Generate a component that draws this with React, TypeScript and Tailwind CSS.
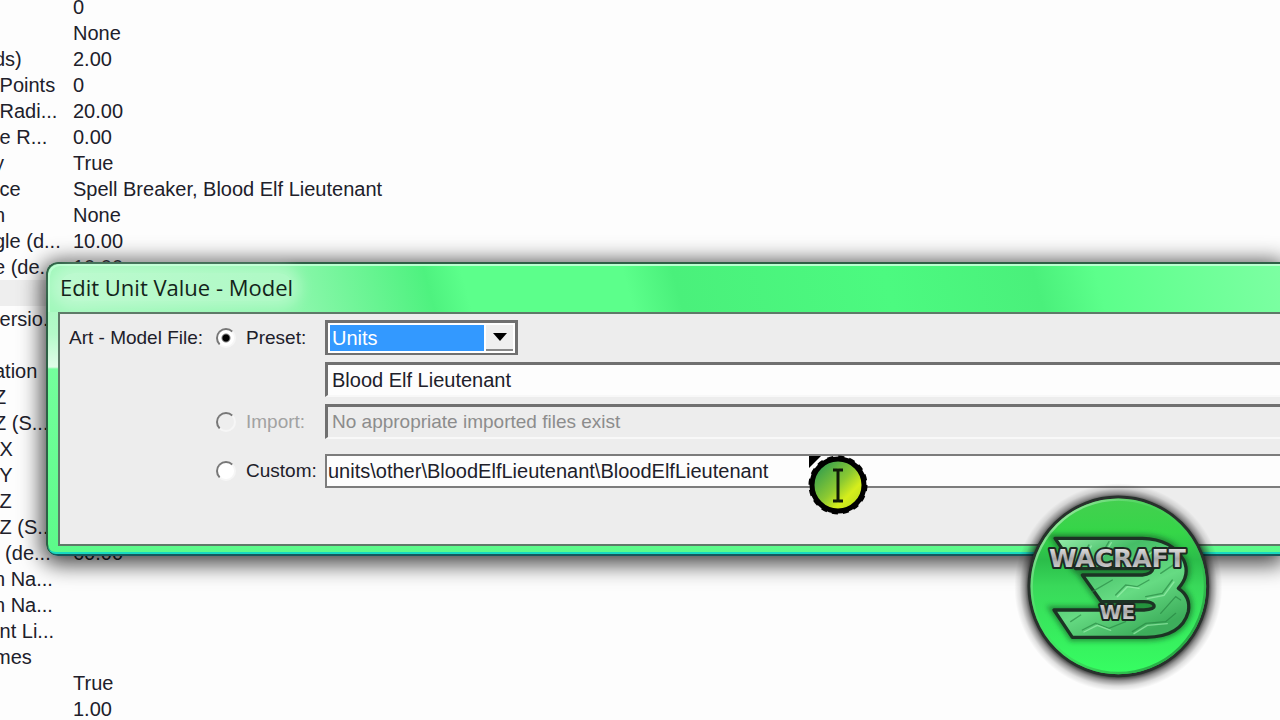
import { useState } from "react";

const ROWS: { label: string; value: string; selected?: boolean }[] = [
  { label: "", value: "0" },
  { label: "", value: "None" },
  { label: "ds)", value: "2.00" },
  { label: " Points", value: "0" },
  { label: " Radi...", value: "20.00" },
  { label: " e R...", value: "0.00" },
  { label: "y", value: "True" },
  { label: " ce", value: "Spell Breaker, Blood Elf Lieutenant" },
  { label: "n", value: "None" },
  { label: "gle (d...", value: "10.00" },
  { label: "e (de...", value: "10.00" },
  { label: "", value: "", selected: true },
  { label: " ersio...", value: "" },
  { label: "", value: "" },
  { label: "ation", value: "" },
  { label: "Z", value: "" },
  { label: "Z (S...", value: "" },
  { label: " X", value: "" },
  { label: " Y", value: "" },
  { label: " Z", value: "" },
  { label: " Z (S...", value: "" },
  { label: "  (de...", value: "60.00" },
  { label: "n Na...", value: "" },
  { label: "n Na...", value: "" },
  { label: " nt Li...", value: "" },
  { label: "mes", value: "" },
  { label: "", value: "True" },
  { label: "", value: "1.00" },
];

const RADIO =
  "appearance-none shrink-0 w-5 h-5 rounded-full border-2 border-t-[#777] border-l-[#777] border-b-[#f6f6f6] border-r-[#f6f6f6] bg-white disabled:bg-[#eee] checked:bg-[radial-gradient(circle,#000_3px,transparent_5px)]";
const SUNKEN =
  "border-t-3 border-l-3 border-t-[#707070] border-l-[#707070] border-b-2 border-b-[#f8f8f8]";

function FieldTable() {
  return (
    <table className="-mt-1.5 -ml-1.5 w-full table-fixed border-collapse text-[20px] leading-[26px] text-[#20202a]">
      <tbody>
        {ROWS.map((row, i) => (
          <tr key={i} className={`h-[26px] ${row.selected ? "bg-[#eeeeee]" : ""}`}>
            <th className="w-[79px] p-0 text-left font-normal whitespace-pre">{row.label}</th>
            <td className="p-0 whitespace-nowrap">{row.value}</td>
          </tr>
        ))}
      </tbody>
    </table>
  );
}

function EditDialog() {
  const [source, setSource] = useState("preset");
  const [path, setPath] = useState("units\\other\\BloodElfLieutenant\\BloodElfLieutenant");

  return (
    <section
      aria-labelledby="dialog-title"
      className="absolute left-[46px] right-0 top-[262px] flex flex-col rounded-l-xl border-2 border-r-0 border-[#2d6045] border-b-[#14595c] bg-[linear-gradient(180deg,#9df8b9_0px,#b5fac9_70px,#e0fde8_103px,#74ff9c_105px,#5cfb8a_100%)] shadow-[0_4px_22px_4px_rgba(0,0,0,0.75)]"
    >
      <div className="flex h-12 items-start rounded-tl-xl border-t-2 border-l-2 border-[#b9ffd0] bg-[linear-gradient(75deg,#a2f8bc_0%,#8cf7ac_20%,#4ef27f_31%,#5cff8b_34%,#5cff8b_47%,#4af07b_51%,#4cfa80_68%,#4af07b_80%,#5cff8b_85%,#7cffa2_100%)] pt-[7px] pl-2.5">
        <h1
          id="dialog-title"
          className="rounded-full bg-white/30 font-['Open_Sans','Noto_Sans',sans-serif] text-[22px] leading-7 text-[#13241a] shadow-[0_0_14px_8px_rgba(255,255,255,0.3)]"
        >
          Edit Unit Value - Model
        </h1>
      </div>

      <form className="ml-2.5 border-2 border-r-0 border-[#5e7a68] bg-[#ededed] pt-1.5 pb-14 pl-[9px] text-[19px] leading-6 text-[#20202a]">
        <div className="flex flex-col gap-[7px]">
          <div className="flex items-center">
            <span className="w-[147px] whitespace-nowrap">Art - Model File:</span>
            <label className="flex w-[109px] items-center gap-2.5">
              <input
                type="radio"
                name="source"
                className={RADIO}
                checked={source === "preset"}
                onChange={() => setSource("preset")}
              />
              Preset:
            </label>
            <div className="flex h-[35px] w-[193px] border-t-3 border-r-3 border-b-2 border-l-3 border-[#707070] bg-white p-0.5">
              <select
                aria-label="Preset category"
                className="min-w-0 flex-1 appearance-none bg-[#3399ff] pl-0.5 text-[20px] leading-6 text-white outline-none"
              >
                <option>Units</option>
              </select>
              <span className="ml-0.5 flex w-[27px] items-center justify-center border-b-2 border-[#888] bg-[#efefef]">
                <svg width="14" height="8" viewBox="0 0 14 8" aria-hidden="true">
                  <path d="M0 0H14L7 8Z" fill="#000" />
                </svg>
              </span>
            </div>
          </div>

          <div className="flex pl-[256px]">
            <select
              aria-label="Preset model"
              className={`h-[35px] w-full appearance-none bg-[#fdfdfd] pl-1 text-[20px] leading-6 outline-none ${SUNKEN}`}
            >
              <option>Blood Elf Lieutenant</option>
            </select>
          </div>

          <div className="flex items-center pl-[147px]">
            <label className="flex w-[109px] shrink-0 items-center gap-2.5 text-[#a2a2a2]">
              <input type="radio" name="source" className={RADIO} disabled />
              Import:
            </label>
            <select
              aria-label="Imported file"
              disabled
              className={`h-[35px] min-w-0 flex-1 appearance-none bg-[#ededed] pl-1 leading-6 text-[#8c8c8c] opacity-100 ${SUNKEN}`}
            >
              <option>No appropriate imported files exist</option>
            </select>
          </div>
        </div>

        <div className="mt-[15px] flex items-center pl-[147px]">
          <label className="flex w-[109px] shrink-0 items-center gap-2.5">
            <input
              type="radio"
              name="source"
              className={RADIO}
              checked={source === "custom"}
              onChange={() => setSource("custom")}
            />
            Custom:
          </label>
          <input
            type="text"
            aria-label="Custom path"
            className="h-[34px] min-w-0 flex-1 border-2 border-r-0 border-[#7c7c7c] bg-[#fdfdfd] pl-px text-[20px] outline-none"
            value={path}
            onChange={(e) => setPath(e.target.value)}
          />
        </div>
      </form>
      <div className="h-2 rounded-bl-xl border-b-2 border-[#18d8c0]" />
    </section>
  );
}

function TextCursor() {
  return (
    <svg className="absolute left-[808px] top-[455px]" width="62" height="62" viewBox="0 0 62 62" aria-hidden="true">
      <defs>
        <linearGradient id="cursor-fill" x1="0.1" y1="0.1" x2="0.9" y2="0.9">
          <stop offset="0" stopColor="#2c9a50" />
          <stop offset="0.5" stopColor="#8bc932" />
          <stop offset="0.75" stopColor="#d6ee1c" />
          <stop offset="1" stopColor="#b9dc1c" />
        </linearGradient>
      </defs>
      <path d="M1 1H13L1 13Z" fill="#000" />
      <circle cx="30" cy="30" r="26" fill="url(#cursor-fill)" stroke="#000" strokeWidth="5" />
      <circle cx="30" cy="30" r="28" fill="none" stroke="#000" strokeWidth="3" strokeDasharray="6 5" />
      <path d="M25 15H29L30 16L31 15H35M30 16V45M25 46H29L30 45L31 46H35" fill="none" stroke="#101a08" strokeWidth="3" />
    </svg>
  );
}

const THREE =
  "M138 175H400Q488 177 524 240Q545 285 508 325Q546 350 538 395Q518 470 412 472H190L135 390H405Q438 388 435 376Q428 363 400 365H277L220 285H400Q428 283 432 266H200Z";

function Emblem() {
  return (
    <svg className="absolute right-[51px] top-[480px]" width="220" height="210" viewBox="0 0 660 630" role="img" aria-label="Wacraft 3 WE">
      <defs>
        <radialGradient id="halo">
          <stop offset="0.86" stopColor="#000" stopOpacity="0.75" />
          <stop offset="0.9" stopColor="#000" stopOpacity="0.4" />
          <stop offset="0.95" stopColor="#000" stopOpacity="0.12" />
          <stop offset="1" stopColor="#000" stopOpacity="0" />
        </radialGradient>
        <linearGradient id="disc" x1="0" y1="0" x2="0" y2="1">
          <stop offset="0" stopColor="#45cf50" />
          <stop offset="0.2" stopColor="#35d648" />
          <stop offset="0.35" stopColor="#2bbd4a" />
          <stop offset="0.5" stopColor="#39d95a" />
          <stop offset="1" stopColor="#36ff62" />
        </linearGradient>
        <linearGradient id="rim" x1="0" y1="0" x2="1" y2="1">
          <stop offset="0" stopColor="#d8f5d8" />
          <stop offset="0.4" stopColor="#4fd765" stopOpacity="0.3" />
          <stop offset="1" stopColor="#168a34" />
        </linearGradient>
        <linearGradient id="stone" x1="0" y1="0" x2="0.6" y2="1">
          <stop offset="0" stopColor="#9af0ae" />
          <stop offset="0.3" stopColor="#45bd66" />
          <stop offset="0.65" stopColor="#66db83" />
          <stop offset="1" stopColor="#3dae5b" />
        </linearGradient>
        <linearGradient id="metal" x1="0" y1="0" x2="0" y2="1">
          <stop offset="0" stopColor="#f4f4f4" />
          <stop offset="0.5" stopColor="#a8a8a8" />
          <stop offset="1" stopColor="#e4e4e4" />
        </linearGradient>
        <filter id="glow" x="-20%" y="-20%" width="140%" height="140%">
          <feGaussianBlur stdDeviation="8" />
        </filter>
      </defs>
      <circle cx="328" cy="322" r="312" fill="url(#halo)" />
      <circle cx="328" cy="319" r="268" fill="url(#disc)" stroke="#28302c" strokeWidth="9" />
      <circle cx="328" cy="319" r="260" fill="none" stroke="url(#rim)" strokeWidth="7" />
      <path d={THREE} fill="none" stroke="#125c26" strokeWidth="24" opacity="0.6" filter="url(#glow)" />
      <path d={THREE} fill="url(#stone)" stroke="#1c3324" strokeWidth="10" strokeLinejoin="round" />
      <g fill="none" strokeWidth="4" strokeLinecap="round" opacity="0.6">
        <path
          d="M205 245L240 195M270 235L300 185M395 235L440 200M250 335L310 300M320 345L350 315L385 320L420 300M455 280L500 250M410 350L460 340L490 300M455 400L500 350L515 360M220 450L260 430L300 445L350 425M370 455L410 430L470 425L500 400M185 425L215 405"
          stroke="#23803e"
        />
        <path
          d="M212 248L247 198M277 238L307 188M402 238L447 203M325 350L355 320L390 325M415 356L465 346L495 306M225 456L265 436L305 451M375 461L415 436L475 431"
          stroke="#a6f7b7"
        />
      </g>
      <g
        fontFamily="'DejaVu Sans', sans-serif"
        fontWeight="700"
        textAnchor="middle"
        fill="url(#metal)"
        stroke="#1d2a22"
        strokeWidth="12"
        strokeLinejoin="round"
        paintOrder="stroke"
      >
        <text x="325" y="262" fontSize="75">WACRAFT</text>
        <text x="325" y="416" fontSize="60">WE</text>
      </g>
    </svg>
  );
}

export default function App() {
  return (
    <main className="relative h-screen overflow-hidden bg-[#fdfdfd] font-['Liberation_Sans',Arial,sans-serif]">
      <FieldTable />
      <EditDialog />
      <TextCursor />
      <Emblem />
    </main>
  );
}
